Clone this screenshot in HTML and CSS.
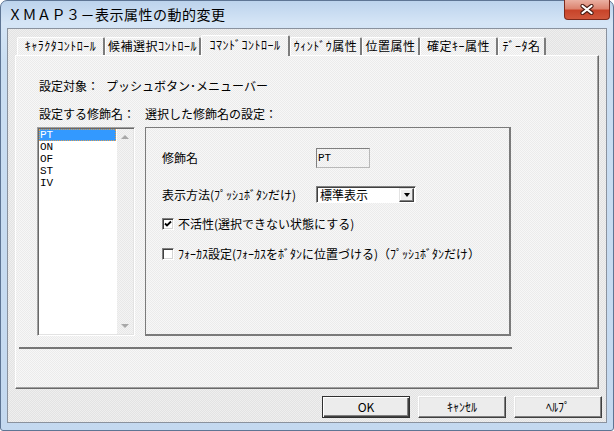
FILE: index.html
```html
<!DOCTYPE html>
<html lang="ja">
<head>
<meta charset="utf-8">
<title>XMAP3－表示属性の動的変更</title>
<link rel="stylesheet" href="styles.css">
</head>
<body>
<div class="window">
  <div class="titlebar">
    <span class="title">ＸＭＡＰ３－表示属性の動的変更</span>
    <div class="close-btn">
      <svg width="14" height="11" viewBox="0 0 14 11">
        <path d="M2.5 2 L11.5 9 M11.5 2 L2.5 9" stroke="#4a1c14" stroke-width="4.2" stroke-linecap="round"/>
        <path d="M2.5 2 L11.5 9 M11.5 2 L2.5 9" stroke="#ffffff" stroke-width="2.2" stroke-linecap="round"/>
      </svg>
    </div>
  </div>
  <div class="client">
    <div class="tabs">
      <div class="tab w1">ｷｬﾗｸﾀｺﾝﾄﾛｰﾙ</div>
      <div class="tab w2">候補選択ｺﾝﾄﾛｰﾙ</div>
      <div class="tab w3 active">ｺﾏﾝﾄﾞｺﾝﾄﾛｰﾙ</div>
      <div class="tab w4">ｳｨﾝﾄﾞｳ属性</div>
      <div class="tab w5">位置属性</div>
      <div class="tab w6">確定ｷｰ属性</div>
      <div class="tab w7">ﾃﾞｰﾀ名</div>
    </div>
    <div class="panel">
      <div class="target">設定対象：<span class="target-value">プッシュボタン･メニューバー</span></div>
      <div class="labels">
        <span class="label-list">設定する修飾名：</span>
        <span>選択した修飾名の設定：</span>
      </div>
      <div class="main-row">
        <div class="listbox">
          <div class="items">
            <div class="item selected">PT</div>
            <div class="item">ON</div>
            <div class="item">OF</div>
            <div class="item">ST</div>
            <div class="item">IV</div>
          </div>
          <div class="scrollbar">
            <div class="sb-btn"><span class="arrow-up"></span></div>
            <div class="sb-track"></div>
            <div class="sb-btn"><span class="arrow-down"></span></div>
          </div>
        </div>
        <div class="group">
          <div class="frow r1">
            <span class="flabel">修飾名</span>
            <div class="textbox">PT</div>
          </div>
          <div class="frow r2">
            <span class="flabel">表示方法(ﾌﾟｯｼｭﾎﾞﾀﾝだけ)</span>
            <div class="combo">
              <span class="combo-text">標準表示</span>
              <div class="combo-btn"><span class="arrow-black"></span></div>
            </div>
          </div>
          <div class="frow r3">
            <div class="checkbox">
              <svg width="8" height="8" viewBox="0 0 8 8"><path d="M1 3.5 L3 5.5 L7 1.5" fill="none" stroke="#000" stroke-width="1.8"/></svg>
            </div>
            <span class="clabel">不活性(選択できない状態にする)</span>
          </div>
          <div class="frow r4">
            <div class="checkbox"></div>
            <span class="clabel">ﾌｫｰｶｽ設定(ﾌｫｰｶｽをﾎﾞﾀﾝに位置づける)（ﾌﾟｯｼｭﾎﾞﾀﾝだけ）</span>
          </div>
        </div>
      </div>
      <div class="separator"></div>
    </div>
    <div class="buttons">
      <div class="btn default">OK</div>
      <div class="btn">ｷｬﾝｾﾙ</div>
      <div class="btn">ﾍﾙﾌﾟ</div>
    </div>
  </div>
</div>
</body>
</html>
```

FILE: styles.css
```css
* { box-sizing: border-box; }
html, body { margin: 0; padding: 0; }
body {
  width: 614px;
  height: 431px;
  overflow: hidden;
  background: #ffffff;
  font-family: "Noto Sans CJK JP", sans-serif;
  font-size: 12px;
  color: #000;
}
.window {
  width: 614px;
  height: 431px;
  border: 1px solid #5e7594;
  border-radius: 7px 7px 3px 3px;
  background: linear-gradient(to bottom, #bcd3ec 0px, #d5e5f6 22px, #cadef2 60px, #c4d9f0 100%);
  padding: 0 6px 7px 6px;
  display: flex;
  flex-direction: column;
}
.titlebar {
  height: 27px;
  flex: none;
  display: flex;
  justify-content: space-between;
  align-items: flex-start;
}
.title {
  font-size: 14px;
  line-height: 16px;
  letter-spacing: 0.5px;
  padding-left: 1px;
  margin-top: 5px;
  color: #000;
}
.close-btn {
  width: 46px;
  height: 20px;
  margin-top: -1px;
  margin-right: -3px;
  border: 1px solid #7d2a1c;
  border-top: none;
  border-radius: 0 0 4px 4px;
  background: linear-gradient(to bottom, #eab0a2 0%, #dc8470 45%, #c8442a 55%, #d0573c 100%);
  display: flex;
  align-items: center;
  justify-content: center;
}
.client {
  flex: 1;
  border: 1px solid #8a929e;
  background: repeating-conic-gradient(#efefef 0% 25%, #e3e3e3 0% 50%) 0 0 / 2px 2px;
  padding: 6px 7px 0 7px;
  display: flex;
  flex-direction: column;
}
.tabs {
  height: 20px;
  display: flex;
  align-items: flex-end;
  padding-left: 2px;
  position: relative;
  z-index: 1;
}
.tab {
  height: 18px;
  background: repeating-conic-gradient(#f7f7f7 0% 25%, #ebebeb 0% 50%) 0 0 / 2px 2px;
  border-top: 1px solid #ffffff;
  border-left: 1px solid #ffffff;
  border-right: 2px solid #7c7c7c;
  border-radius: 2px 2px 0 0;
  font-size: 12px;
  letter-spacing: 0.5px;
  line-height: 16px;
  text-align: center;
  white-space: nowrap;
}
.tab.active {
  height: 21px;
  margin-bottom: -1px;
  line-height: 18px;
}
.w1 { width: 88px; }
.w2 { width: 96px; }
.w3 { width: 89px; }
.w4 { width: 72px; }
.w5 { width: 58px; }
.w6 { width: 78px; }
.w7 { width: 48px; }
.panel {
  height: 334px;
  flex: none;
  border-top: 1px solid #ffffff;
  border-left: 1px solid #ffffff;
  border-right: 1px solid #696969;
  border-bottom: 1px solid #696969;
  box-shadow: inset -1px -1px 0 #a0a0a0;
  background: repeating-conic-gradient(#f7f7f7 0% 25%, #ebebeb 0% 50%) 0 0 / 2px 2px;
  padding: 23px 0 0 21px;
}
.target {
  height: 14px;
  line-height: 14px;
  padding-left: 2px;
}
.target-value { margin-left: 7px; }
.labels {
  margin-top: 14px;
  height: 14px;
  line-height: 14px;
  display: grid;
  grid-template-columns: 98px 366px;
  column-gap: 10px;
}
.label-list { padding-left: 2px; }
.main-row {
  margin-top: 6px;
  height: 209px;
  display: grid;
  grid-template-columns: 98px 366px;
  column-gap: 10px;
}
.listbox {
  height: 209px;
  border: 1px solid;
  border-color: #a0a0a0 #ffffff #ffffff #a0a0a0;
  box-shadow: inset 1px 1px 0 #696969, inset -1px -1px 0 #e3e3e3;
  padding: 1px;
  display: flex;
  background: #ffffff;
}
.items {
  flex: 1;
  background: #ffffff;
}
.item {
  height: 12px;
  line-height: 12px;
  padding-left: 1px;
  font-family: "Liberation Mono", monospace;
  font-size: 11px;
}
.item.selected {
  background: #3399ff;
  color: #ffffff;
  outline: 1px dotted #e0a050;
  outline-offset: -1px;
  margin-right: 1px;
}
.scrollbar {
  width: 16px;
  display: flex;
  flex-direction: column;
  background: repeating-conic-gradient(#f4f4f4 0% 25%, #e8e8e8 0% 50%) 0 0 / 2px 2px;
}
.sb-btn {
  height: 16px;
  display: flex;
  align-items: center;
  justify-content: center;
}
.sb-track { flex: 1; }
.arrow-up {
  width: 0; height: 0;
  border-left: 4px solid transparent;
  border-right: 4px solid transparent;
  border-bottom: 4px solid #a8a8a8;
}
.arrow-down {
  width: 0; height: 0;
  border-left: 4px solid transparent;
  border-right: 4px solid transparent;
  border-top: 4px solid #a8a8a8;
}
.group {
  height: 209px;
  border-style: solid;
  border-color: #7a7a7a;
  border-width: 1px 2px 2px 1px;
  padding: 20px 0 0 16px;
}
.frow {
  display: flex;
  align-items: center;
  line-height: 14px;
}
.flabel { width: 154px; }
.r1 { height: 20px; }
.r2 { height: 17px; margin-top: 18px; }
.r3 { height: 14px; margin-top: 14px; }
.r4 { height: 14px; margin-top: 16px; }
.textbox {
  width: 54px;
  height: 20px;
  border: 1px solid #7f7f7f;
  border-right-color: #b8b8b8;
  border-bottom-color: #b8b8b8;
  padding-left: 1px;
  line-height: 18px;
  font-family: "Liberation Mono", monospace;
  font-size: 11px;
}
.combo {
  width: 100px;
  height: 17px;
  border: 1px solid;
  border-color: #808080 #ffffff #ffffff #808080;
  box-shadow: inset 1px 1px 0 #404040;
  background: #ffffff;
  display: flex;
  align-items: center;
  justify-content: space-between;
  padding: 1px 1px 0 3px;
}
.combo-text { line-height: 14px; }
.combo-btn {
  width: 15px;
  height: 14px;
  border: 1px solid;
  border-color: #e3e3e3 #404040 #404040 #e3e3e3;
  box-shadow: inset -1px -1px 0 #808080, inset 1px 1px 0 #ffffff;
  background: #ececec;
  display: flex;
  align-items: center;
  justify-content: center;
}
.arrow-black {
  width: 0; height: 0;
  border-left: 3.5px solid transparent;
  border-right: 3.5px solid transparent;
  border-top: 4px solid #000;
}
.checkbox {
  width: 12px;
  height: 12px;
  border: 1px solid;
  border-color: #808080 #ffffff #ffffff #808080;
  box-shadow: inset 1px 1px 0 #404040, inset -1px -1px 0 #d4d4d4;
  background: #ffffff;
  display: flex;
  align-items: center;
  justify-content: center;
  flex: none;
}
.clabel { margin-left: 4px; white-space: nowrap; }
.separator {
  margin-top: 11px;
  margin-left: -18px;
  width: 493px;
  height: 2px;
  background: #767676;
}
.buttons {
  margin-top: 7px;
  margin-right: -3px;
  display: flex;
  justify-content: flex-end;
  gap: 8px;
}
.btn {
  width: 88px;
  height: 22px;
  border: 1px solid;
  border-color: #ffffff #404040 #404040 #ffffff;
  box-shadow: inset -1px -1px 0 #808080, inset 1px 1px 0 #e3e3e3;
  background: #ececec;
  display: flex;
  align-items: center;
  justify-content: center;
  line-height: 14px;
}
.btn.default {
  border-color: #303030;
  box-shadow: inset 1px 1px 0 #ffffff, inset -1px -1px 0 #404040, inset -2px -2px 0 #808080;
}
```
